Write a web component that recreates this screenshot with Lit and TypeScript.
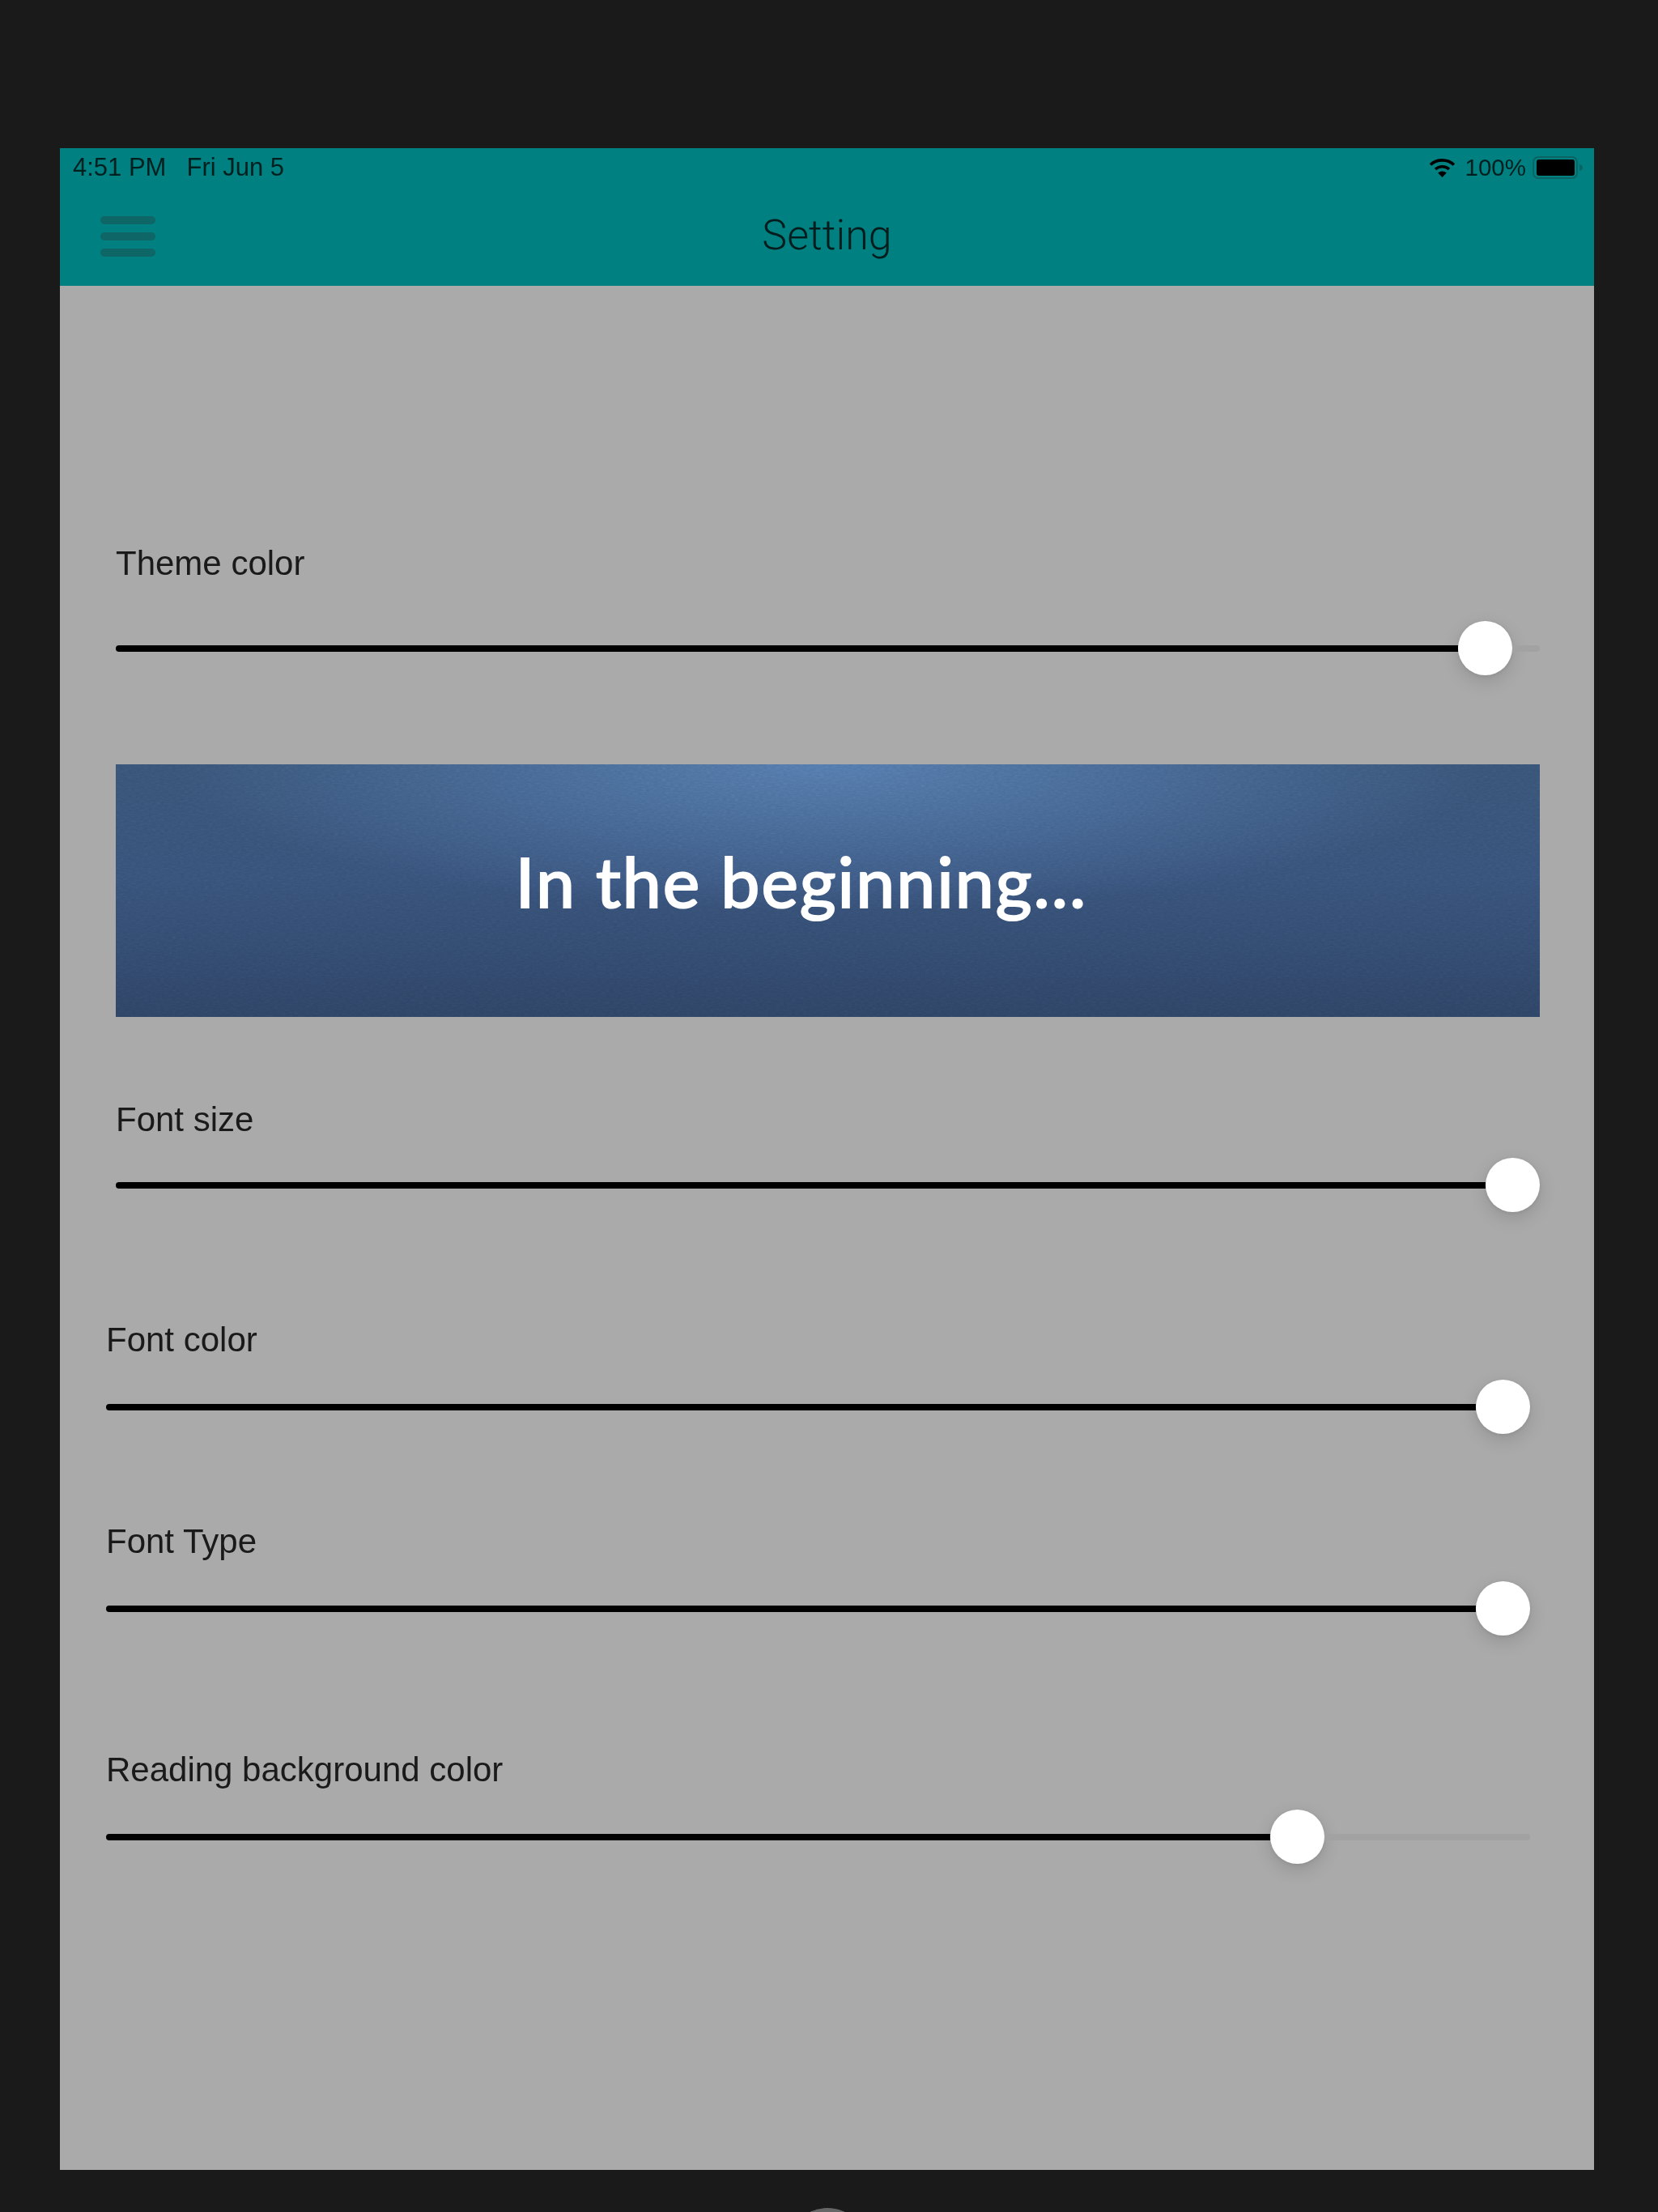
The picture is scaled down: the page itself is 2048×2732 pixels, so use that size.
import { LitElement, html, css } from "lit";
import { customElement, property } from "lit/decorators.js";

@customElement("setting-slider")
class SettingSlider extends LitElement {
  @property() label = "";
  @property({ type: Number }) value = 1;
  static styles = css`
    :host { display: flex; flex-direction: column; gap: var(--row-gap, 24px); }
    .label {
      height: 50px; line-height: 50px; font-size: 42px; color: #1a1a1a;
      font-family: "Liberation Sans", Arial, sans-serif;
    }
    .slider { display: flex; align-items: center; height: 67px; }
    .fill { height: 8px; background: #000; border-radius: 4px 0 0 4px; flex: none; }
    .thumb {
      flex: none; width: 67px; height: 67px; border-radius: 50%; background: #fff; margin-top: -2px;
      box-shadow: 0 7px 22px rgba(0, 0, 0, 0.14), 0 1px 4px rgba(0, 0, 0, 0.08);
    }
    .rest { flex: 1; height: 8px; background: #a2a2a2; border-radius: 0 4px 4px 0; }
  `;
  render() {
    return html`
      <div class="label">${this.label}</div>
      <div class="slider">
        <div class="fill" style="width: calc((100% - 67px) * ${this.value})"></div>
        <div class="thumb"></div>
        <div class="rest"></div>
      </div>
    `;
  }
}

@customElement("app-root")
class AppRoot extends LitElement {
  static styles = css`
    :host {
      display: block; width: 2048px; height: 2732px; overflow: hidden; box-sizing: border-box;
      background: #1a1a1a; padding: 183px 79px 0 74px;
      font-family: "Liberation Sans", Arial, sans-serif;
    }
    .screen { height: 2497px; background: #aaaaaa; display: flex; flex-direction: column; }
    .topbar { background: #008080; height: 170px; flex: none; display: flex; flex-direction: column; }
    .status {
      height: 48px; display: flex; align-items: center; padding: 0 13px 0 16px;
      font-size: 31px; color: #021f1f;
    }
    .time { margin-right: 25px; }
    .right { margin-left: auto; display: flex; align-items: center; }
    .pct { font-size: 29.5px; margin: 0 8px 0 12px; }
    .nav { flex: 1; display: grid; grid-template-columns: 1fr auto 1fr; align-items: center; padding: 0 50px; }
    .menu { display: flex; flex-direction: column; gap: 10px; width: 68px; }
    .menu span { height: 10px; border-radius: 5px; background: #0e6666; }
    .title {
      font-family: Roboto, "Liberation Sans", sans-serif; font-weight: 300;
      font-size: 52px; line-height: 60px; color: #041c1c; margin-top: -3px;
    }
    .body { flex: 1; display: flex; flex-direction: column; }
    .a { margin-left: 69px; margin-right: 67px; }
    .b { margin-left: 57px; margin-right: 79px; }
    .theme { margin-top: 318px; --row-gap: 46.5px; }
    .banner {
      margin-top: 109.5px; height: 312px; position: relative; overflow: hidden;
      display: flex; justify-content: center;
      background:
        radial-gradient(ellipse 46% 58% at 50% 0%, rgba(88, 128, 182, 0.85), rgba(88, 128, 182, 0) 100%),
        linear-gradient(#385375, #375178 45%, #2e4364);
    }
    .noise { position: absolute; inset: 0; width: 100%; height: 100%; opacity: 0.22; mix-blend-mode: overlay; }
    .banner-text {
      position: relative; font-family: Lato, sans-serif; font-weight: 400; font-size: 86px;
      letter-spacing: 2px; -webkit-text-stroke: 2.2px #fff;
      line-height: 100px; color: #fff; margin-top: 94px; margin-left: -65px; white-space: nowrap;
    }
    .size { margin-top: 102px; --row-gap: 22.5px; }
    .color { margin-top: 132.5px; --row-gap: 24.5px; }
    .type { margin-top: 107.5px; --row-gap: 24.5px; }
    .reading { margin-top: 140.5px; --row-gap: 24.5px; }
    .home { width: 98px; height: 98px; border-radius: 50%; background: #666; margin: 47px auto 0; }
    .bar { display: block; }
  `;
  render() {
    return html`
      <div class="screen">
        <div class="topbar">
          <div class="status">
            <span class="time">4:51 PM</span><span>Fri Jun 5</span>
            <div class="right">
              <svg class="bar" width="33" height="24" viewBox="0 0 33 24">
                <g fill="none" stroke="#000" stroke-width="3.6">
                  <path d="M2 8.5C10 1 23 1 31 8.5" />
                  <path d="M8 14C12.8 9.6 20.2 9.6 25 14" />
                </g>
                <path fill="#000" d="M16.5 24L11.2 18.6C14 15.8 19 15.8 21.8 18.6Z" />
              </svg>
              <span class="pct">100%</span>
              <svg class="bar" width="63" height="28" viewBox="0 0 63 28">
                <rect x="1" y="1" width="54" height="26" rx="6" fill="none" stroke="#0a6464" stroke-width="2" />
                <rect x="5" y="4" width="47" height="20" rx="3" fill="#000" />
                <path d="M58 10c2.5 .6 4 2 4 4s-1.500 3.400-4 4Z" fill="#0a6464" />
              </svg>
            </div>
          </div>
          <div class="nav">
            <div class="menu"><span></span><span></span><span></span></div>
            <div class="title">Setting</div>
            <div></div>
          </div>
        </div>
        <div class="body">
          <setting-slider class="a theme" label="Theme color" value="0.98"></setting-slider>
          <div class="a banner">
            <svg class="noise" preserveAspectRatio="none">
              <filter id="grain"><feTurbulence type="fractalNoise" baseFrequency="0.2 0.6" numOctaves="2" seed="4" /><feColorMatrix type="saturate" values="0" /></filter>
              <rect width="100%" height="100%" filter="url(#grain)" />
            </svg>
            <div class="banner-text">In the beginning...</div>
          </div>
          <setting-slider class="a size" label="Font size" value="1"></setting-slider>
          <setting-slider class="b color" label="Font color" value="1"></setting-slider>
          <setting-slider class="b type" label="Font Type" value="1"></setting-slider>
          <setting-slider class="b reading" label="Reading background color" value="0.8496"></setting-slider>
        </div>
      </div>
      <div class="home"></div>
    `;
  }
}
